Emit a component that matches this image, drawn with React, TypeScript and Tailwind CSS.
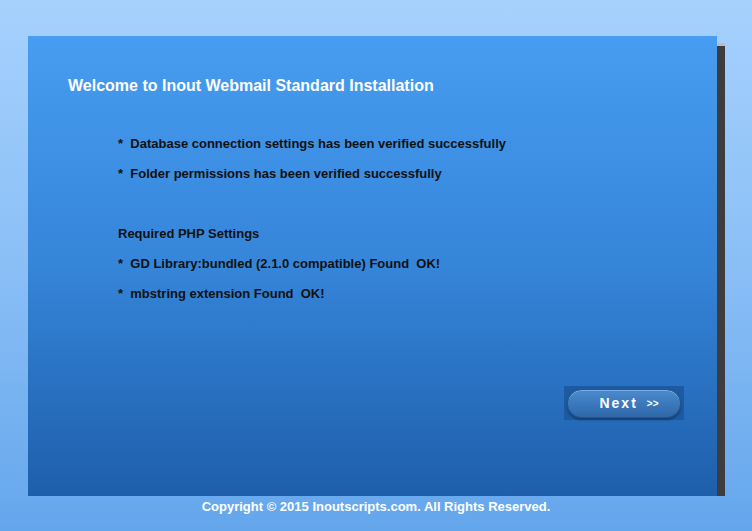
export default function App() {
  const checks = [
    "Database connection settings has been verified successfully",
    "Folder permissions has been verified successfully",
  ];

  const php = [
    "GD Library:bundled (2.1.0 compatible) Found\u00a0\u00a0OK!",
    "mbstring extension Found\u00a0\u00a0OK!",
  ];

  return (
    <div className="h-[531px] w-[752px] overflow-hidden bg-gradient-to-b from-[#a6d1fd] via-[#8abff6] to-[#64a6ec] font-['Liberation_Sans',Arial,sans-serif]">
      <div className="flex pl-[28px] pt-[36px]">
        {/* PANEL */}
        <div className="flex h-[460px] w-[689px] flex-col bg-gradient-to-b from-[#479df1] via-[#3585d9] to-[#1e5fab] px-[40px] pt-[41px]">
          <h1 className="text-[16px] font-bold leading-[18px] text-white">
            Welcome to Inout Webmail Standard Installation
          </h1>

          <div className="mt-[41px] pl-[50px] text-[13px] font-bold leading-[15px] text-[#111]">
            <div className="flex flex-col gap-[15px]">
              {checks.map((c, i) => (
                <Item key={i} text={c} />
              ))}
            </div>

            <div className="mt-[45px]">Required PHP Settings</div>

            <div className="mt-[15px] flex flex-col gap-[15px]">
              {php.map((c, i) => (
                <Item key={i} text={c} />
              ))}
            </div>
          </div>

          <div className="mt-[85px] flex justify-end">
            <div className="-mr-[7px] flex h-[34px] w-[120px] items-center justify-center bg-[#1c5aa1]">
              <button className="flex h-[29px] w-[114px] items-center justify-center gap-[9px] rounded-full border border-[#23578f] bg-gradient-to-b from-[#4d8bcf] via-[#3b79bd] to-[#2f68a8] pl-[10px] shadow-[inset_0_1px_0_#7aaee3,0_2px_2px_#143f73] text-white">
                <span className="text-[14px] font-bold tracking-[2px]">Next</span>
                <span className="text-[10px] font-bold">&gt;&gt;</span>
              </button>
            </div>
          </div>
        </div>

        {/* RIGHT SHADOW */}
        <div className="mt-[7px] flex h-[453px] w-[8px] flex-col bg-[#3d3d3f]">
          <div className="h-[3px] bg-[#b8bcc4]" />
        </div>
      </div>

      <div className="mt-[3px] text-center text-[13px] font-bold leading-[15px] text-white">
        Copyright © 2015 Inoutscripts.com. All Rights Reserved.
      </div>
    </div>
  );
}

function Item({ text }: any) {
  return (
    <div>
      *&nbsp;&nbsp;{text}
    </div>
  );
}
